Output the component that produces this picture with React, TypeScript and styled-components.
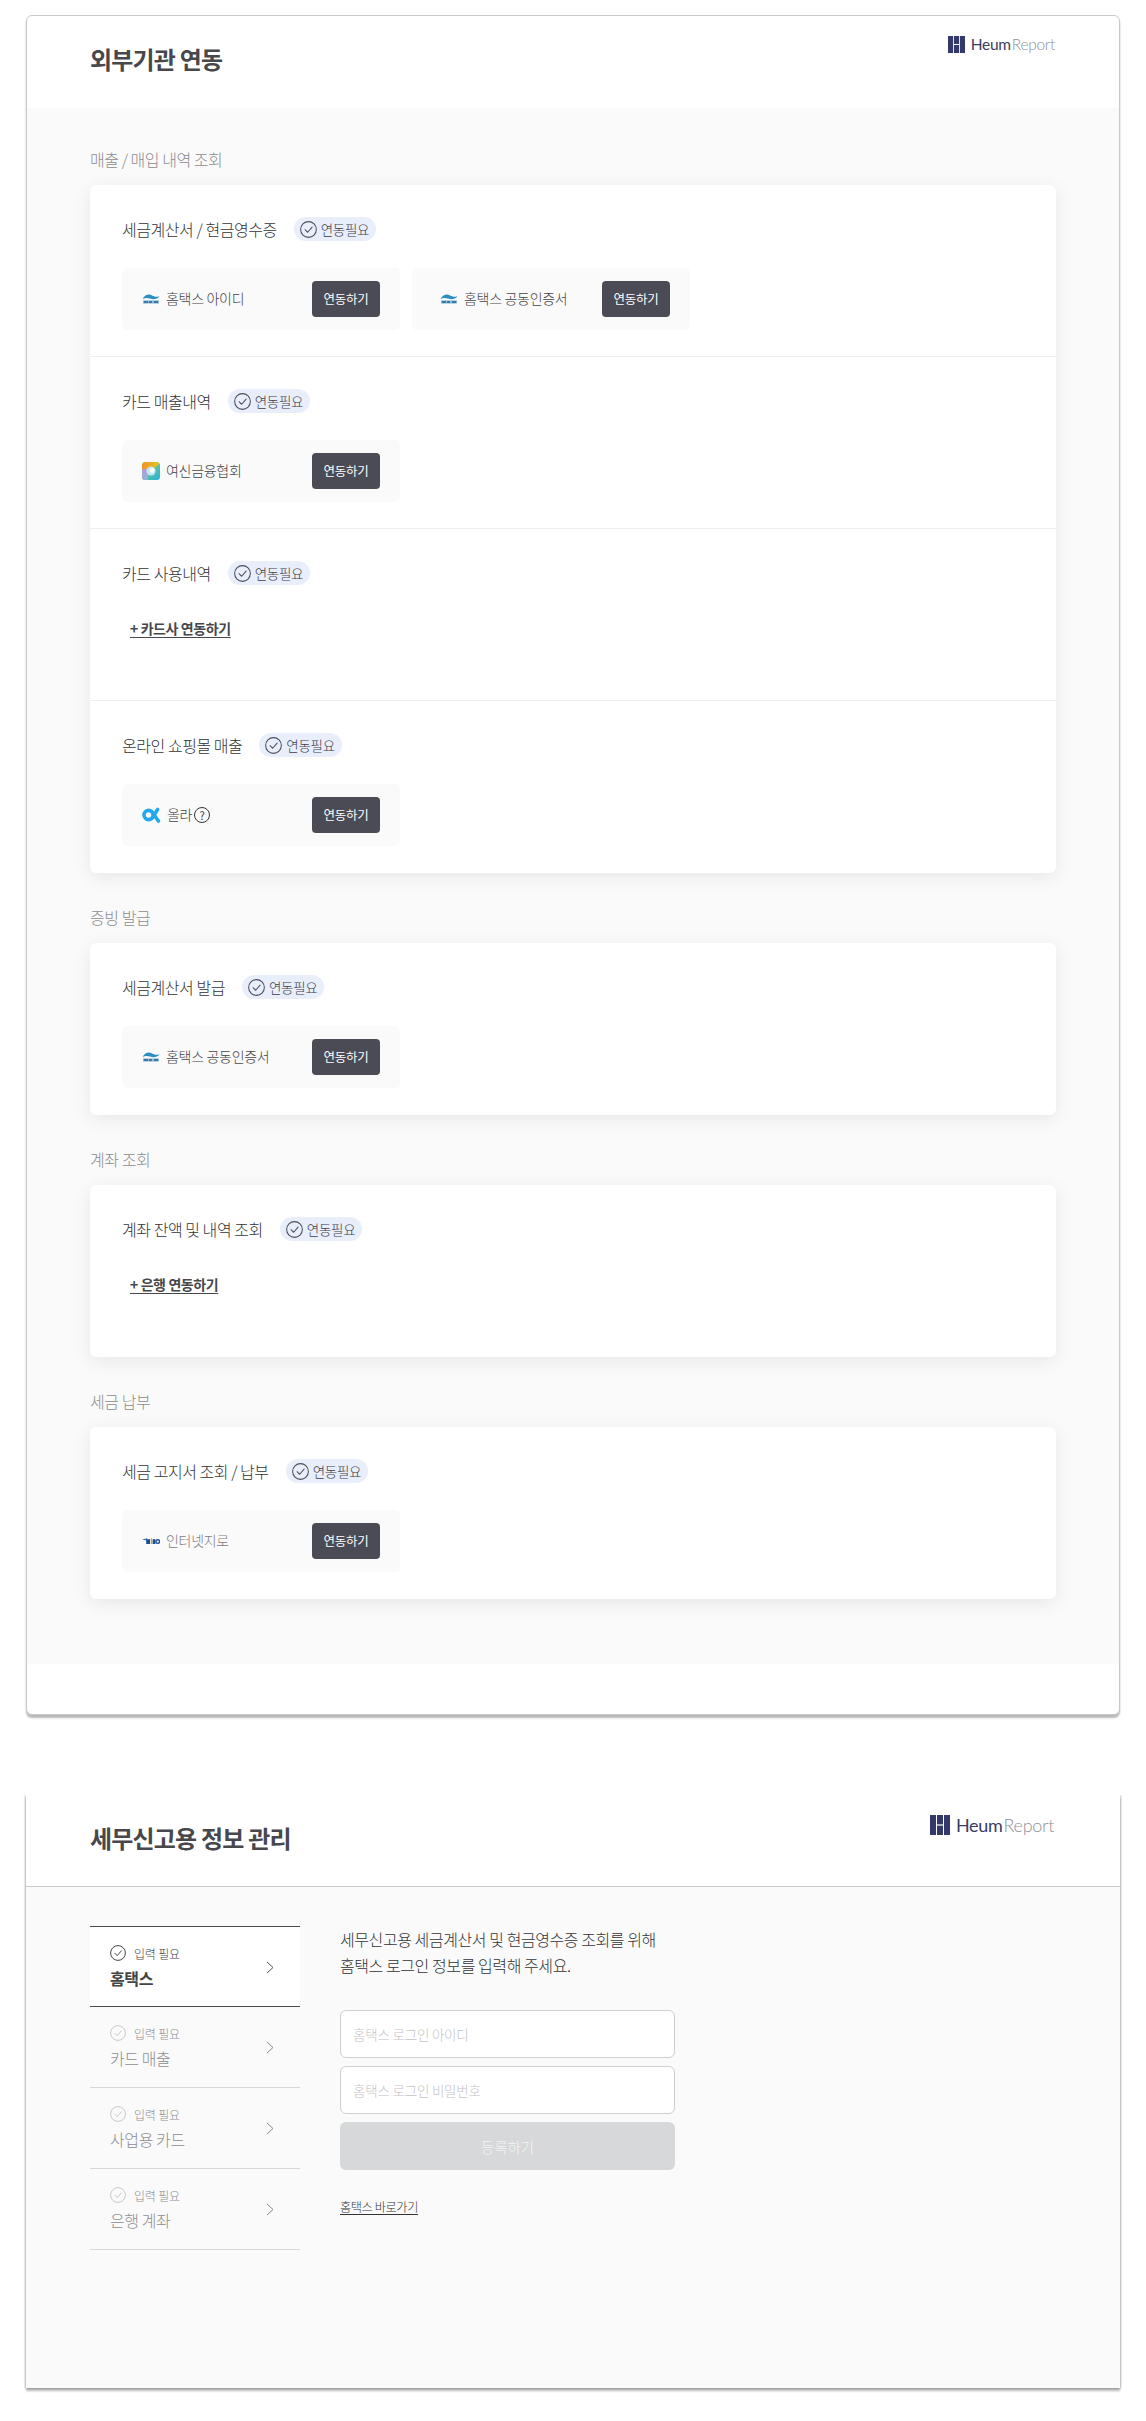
import React from "react";
import styled, { createGlobalStyle } from "styled-components";

const GlobalStyle = createGlobalStyle`
  html, body {
    margin: 0;
    padding: 0;
    background: #fff;
    font-family: "Noto Sans CJK KR", "Noto Sans", sans-serif;
    color: #444;
  }
  * { box-sizing: border-box; }
`;

const Page = styled.div`
  width: 1146px;
  height: 2421px;
  padding: 15px 26px 0;
  overflow: hidden;
`;
const Window = styled.section`
  background: #fff;
  border: 1px solid #c9c9c9;
  border-radius: 6px;
  box-shadow: 0 3px 2px rgba(0, 0, 0, 0.28);
`;
const SecondWindow = styled.section`
  margin-top: 80px;
  background: #fff;
  box-shadow: -1px 0 2px rgba(0, 0, 0, 0.2), 1px 0 2px rgba(0, 0, 0, 0.2),
    0 3px 2px rgba(0, 0, 0, 0.28);
  clip-path: inset(0 -6px -8px -6px);
`;
const Header = styled.header`
  height: 92px;
  padding: 0 64px 0 63px;
  display: flex;
  justify-content: space-between;
  align-items: flex-start;
`;
const Title = styled.h1`
  margin: 27px 0 0;
  font-size: 24px;
  line-height: 32px;
  font-weight: 700;
  letter-spacing: -0.8px;
  color: #47474c;
`;
const LogoWrap = styled.div<{ $big?: boolean }>`
  margin-top: 20px;
  display: flex;
  align-items: center;
  gap: 6px;
  font-family: Lato, sans-serif;
  font-size: ${(p) => (p.$big ? "18px" : "15.5px")};
  line-height: ${(p) => (p.$big ? "20px" : "17px")};
  letter-spacing: -0.3px;
`;
const LogoHeum = styled.span`
  color: #3a3d63;
`;
const LogoReport = styled.span`
  color: #8f919c;
  font-weight: 300;
  margin-left: 1px;
`;
const Body = styled.div`
  background: #fafafa;
  padding: 41px 63px 65px;
`;
const SectionLabel = styled.h2`
  margin: 0 0 16px;
  font-size: 16px;
  line-height: 20px;
  font-weight: 300;
  color: #8c8c90;
  letter-spacing: -0.45px;
`;
const Section = styled.div`
  & + & {
    margin-top: 34px;
  }
`;
const Card = styled.div`
  background: #fff;
  border-radius: 6px;
  box-shadow: 0 4px 18px rgba(0, 0, 0, 0.08);
`;
const Row = styled.div`
  height: 172px;
  padding: 32px 32px 0;
  border-bottom: 1px solid #eeeeef;
  &:last-child {
    border-bottom: none;
  }
`;
const RowHead = styled.div`
  display: flex;
  align-items: center;
  height: 24px;
  gap: 17px;
`;
const RowTitle = styled.span`
  font-size: 16px;
  font-weight: 300;
  color: #333336;
  letter-spacing: -0.45px;
`;
const Badge = styled.span`
  display: inline-flex;
  align-items: center;
  gap: 4px;
  height: 24px;
  padding: 0 7px 0 6px;
  border-radius: 12px;
  background: #e9eefb;
  font-size: 13.5px;
  font-weight: 300;
  letter-spacing: -0.3px;
  color: #3a3d4e;
`;
const Tiles = styled.div`
  display: flex;
  gap: 12px;
  margin-top: 27px;
`;
const Tile = styled.div<{ $inset?: boolean }>`
  width: 278px;
  height: 62px;
  padding: 0 20px 0 ${(p) => (p.$inset ? "28px" : "20px")};
  display: flex;
  align-items: center;
  border-radius: 5px;
  background: #fafafa;
`;
const TileName = styled.span<{ $muted?: boolean }>`
  margin: 0 0 2px 6px;
  font-size: 14px;
  font-weight: 300;
  letter-spacing: -0.3px;
  color: ${(p) => (p.$muted ? "#7c7c80" : "#444448")};
`;
const HelpMark = styled.span`
  margin-left: 2px;
  width: 16px;
  height: 16px;
  border: 1px solid #333;
  border-radius: 50%;
  display: inline-flex;
  align-items: center;
  justify-content: center;
  font-size: 11px;
  line-height: 1;
  color: #333;
`;
const ConnectButton = styled.button`
  margin-left: auto;
  width: 68px;
  height: 36px;
  padding: 0 0 2px;
  border: none;
  border-radius: 4px;
  background: #4b4b55;
  color: #fff;
  font-family: inherit;
  font-size: 12.5px;
  font-weight: 400;
  letter-spacing: -0.3px;
`;
const AddLink = styled.a`
  display: inline-block;
  margin: 33px 0 0 8px;
  font-size: 14px;
  line-height: 20px;
  font-weight: 700;
  letter-spacing: -0.4px;
  color: #47474c;
  text-decoration: underline;
  text-underline-offset: 3px;
`;
const SecondHeader = styled(Header)`
  padding: 0 66px 0 64px;
  border-bottom: 1px solid #c9c9c9;
`;
const SecondBody = styled.div`
  height: 501px;
  background: #fafafa;
  padding: 39px 64px 0;
  display: flex;
  gap: 40px;
`;
const Steps = styled.nav`
  width: 210px;
`;
const Step = styled.div<{ $active?: boolean }>`
  height: 81px;
  padding: 18px 20px 0;
  position: relative;
  background: ${(p) => (p.$active ? "#fff" : "transparent")};
  border-bottom: 1px solid ${(p) => (p.$active ? "#4b4b50" : "#d8d8d8")};
  border-top: ${(p) => (p.$active ? "1px solid #4b4b50" : "none")};
  color: ${(p) => (p.$active ? "#444" : "#8e8e92")};
`;
const StepStatus = styled.div`
  display: flex;
  align-items: center;
  gap: 8px;
  height: 16px;
  font-size: 12px;
  font-weight: 300;
  letter-spacing: -0.2px;
`;
const StepName = styled.div<{ $active?: boolean }>`
  margin-top: 5px;
  font-size: 16px;
  line-height: 24px;
  letter-spacing: -0.4px;
  font-weight: ${(p) => (p.$active ? 700 : 300)};
`;
const StepArrow = styled.svg`
  position: absolute;
  right: 26px;
  top: 34px;
`;
const FormArea = styled.div`
  width: 335px;
`;
const Intro = styled.p`
  margin: 0 0 32px;
  font-size: 16px;
  font-weight: 300;
  line-height: 26px;
  letter-spacing: -0.42px;
  color: #333336;
  white-space: nowrap;
`;
const Field = styled.input`
  display: block;
  width: 100%;
  height: 48px;
  margin-bottom: 8px;
  padding: 0 12px;
  border: 1px solid #cfcfd1;
  border-radius: 6px;
  background: #fff;
  font-family: inherit;
  font-size: 13.5px;
  font-weight: 300;
  letter-spacing: -0.2px;
  &::placeholder {
    color: #c4c4c6;
  }
`;
const Submit = styled.button`
  display: block;
  width: 100%;
  height: 48px;
  padding: 0;
  border: none;
  border-radius: 6px;
  background: #d6d8d9;
  color: #f4f4f4;
  font-family: inherit;
  font-size: 14.5px;
  font-weight: 300;
`;
const SiteLink = styled.a`
  display: inline-block;
  margin-top: 28px;
  font-size: 12.2px;
  font-weight: 300;
  line-height: 18px;
  letter-spacing: -0.4px;
  color: #333336;
  text-decoration: underline;
  text-underline-offset: 2px;
`;
const Footer = styled.div`
  height: 50px;
`;

const CheckCircle = ({ size = 17, color = "#4c4f60" }: { size?: number; color?: string }) => (
  <svg width={size} height={size} viewBox="0 0 16 16" fill="none" stroke={color} strokeWidth="1">
    <circle cx="8" cy="8" r="7.4" />
    <path d="M4.8 8.2 7.2 10.6 11.4 5.8" strokeLinecap="round" strokeLinejoin="round" />
  </svg>
);

const Logo = ({ big }: { big?: boolean }) => {
  const size = big ? 20 : 17;
  return (
    <LogoWrap $big={big}>
      <svg width={size} height={size} viewBox="0 0 20 20" fill="#333a6b">
        <rect x="0" y="0" width="6" height="20" />
        <rect x="7" y="0" width="6" height="9.4" />
        <rect x="7" y="10.6" width="6" height="9.4" />
        <rect x="14" y="0" width="6" height="20" />
      </svg>
      <span>
        <LogoHeum>Heum</LogoHeum>
        <LogoReport>Report</LogoReport>
      </span>
    </LogoWrap>
  );
};

const HometaxLogo = () => (
  <svg width="18" height="12" viewBox="0 0 18 12">
    <path d="M0.5 6C3 1.5 7 .8 10 2.4 12 3.4 14 3.8 17.5 3.6 15 6.6 11 6.8 8 5.6 5.5 4.6 3 4.6 .5 6Z" fill="#2a8fc0" />
    <path d="M1 7.4H17V10.6H1Z" fill="#8ab8d2" />
    <path d="M2 8.2H6V9.8H2ZM7 8.2H10V9.8H7ZM12 8.2H16V9.8H12Z" fill="#1f6494" />
  </svg>
);

const CreditLogo = () => (
  <svg width="18" height="18" viewBox="0 0 18 18">
    <defs>
      <linearGradient id="cl1" x1="0" y1="0" x2="1" y2="0">
        <stop offset="0" stopColor="#f0932b" />
        <stop offset="1" stopColor="#e6c41f" />
      </linearGradient>
      <linearGradient id="cl2" x1="0" y1="0" x2="1" y2="1">
        <stop offset="0" stopColor="#a4d94a" />
        <stop offset="1" stopColor="#1db0e6" />
      </linearGradient>
      <linearGradient id="cl3" x1="0" y1="0" x2="0" y2="1">
        <stop offset="0" stopColor="#b59ad6" />
        <stop offset="1" stopColor="#8fb4e2" />
      </linearGradient>
    </defs>
    <rect width="18" height="18" rx="3.5" fill="url(#cl2)" />
    <path d="M0 3.5A3.5 3.5 0 0 1 3.5 0H15A3 3 0 0 1 17 2L13 5.5H6L3 8V18A3 3 0 0 1 0 14.5Z" fill="url(#cl1)" />
    <path d="M0 7H6V18H3.5A3.5 3.5 0 0 1 0 14.5Z" fill="url(#cl3)" />
    <circle cx="9" cy="9" r="4.6" fill="#c5e6f6" />
    <circle cx="10.2" cy="8.4" r="2.3" fill="#fff" />
  </svg>
);

const OllaLogo = () => (
  <svg width="19" height="16" viewBox="0 0 19 16" fill="none" stroke="#22a8f0" strokeWidth="3.6">
    <circle cx="6.6" cy="8" r="4.6" />
    <path d="M10 11 15.6 2.4M10 5 16.4 14" strokeLinecap="round" />
  </svg>
);

const GiroLogo = () => (
  <svg width="18" height="10" viewBox="0 0 18 10">
    <path d="M0 3.6 5.4 2.2 4.4 4.6Z" fill="#2a78b8" />
    <path d="M4.2 3.2H8V8H4.2Z" fill="#1d4f8f" />
    <rect x="8.7" y="2.4" width="1.3" height="5.6" fill="#e09a2a" />
    <rect x="10.6" y="3.2" width="2.8" height="4.8" fill="#1d4f8f" />
    <circle cx="15.8" cy="5.6" r="1.8" fill="none" stroke="#1d4f8f" strokeWidth="1.4" />
  </svg>
);

type TileData = { logo: React.ReactNode; name: string; muted?: boolean; help?: boolean; inset?: boolean };
type RowData = { title: string; tiles?: TileData[]; add?: string };
type SectionData = { label: string; rows: RowData[] };

const sections: SectionData[] = [
  {
    label: "매출 / 매입 내역 조회",
    rows: [
      {
        title: "세금계산서 / 현금영수증",
        tiles: [
          { logo: <HometaxLogo />, name: "홈택스 아이디" },
          { logo: <HometaxLogo />, name: "홈택스 공동인증서", inset: true },
        ],
      },
      { title: "카드 매출내역", tiles: [{ logo: <CreditLogo />, name: "여신금융협회" }] },
      { title: "카드 사용내역", add: "+ 카드사 연동하기" },
      { title: "온라인 쇼핑몰 매출", tiles: [{ logo: <OllaLogo />, name: "올라", help: true }] },
    ],
  },
  {
    label: "증빙 발급",
    rows: [{ title: "세금계산서 발급", tiles: [{ logo: <HometaxLogo />, name: "홈택스 공동인증서" }] }],
  },
  { label: "계좌 조회", rows: [{ title: "계좌 잔액 및 내역 조회", add: "+ 은행 연동하기" }] },
  {
    label: "세금 납부",
    rows: [
      {
        title: "세금 고지서 조회 / 납부",
        tiles: [{ logo: <GiroLogo />, name: "인터넷지로", muted: true }],
      },
    ],
  },
];

const steps = ["홈택스", "카드 매출", "사업용 카드", "은행 계좌"];

export default function App() {
  return (
    <Page>
      <GlobalStyle />
      <Window>
        <Header>
          <Title>외부기관 연동</Title>
          <Logo />
        </Header>
        <Body>
          {sections.map((section) => (
            <Section key={section.label}>
              <SectionLabel>{section.label}</SectionLabel>
              <Card>
                {section.rows.map((row) => (
                  <Row key={row.title}>
                    <RowHead>
                      <RowTitle>{row.title}</RowTitle>
                      <Badge>
                        <CheckCircle />
                        연동필요
                      </Badge>
                    </RowHead>
                    {row.tiles && (
                      <Tiles>
                        {row.tiles.map((tile) => (
                          <Tile key={tile.name} $inset={tile.inset}>
                            {tile.logo}
                            <TileName $muted={tile.muted}>{tile.name}</TileName>
                            {tile.help && <HelpMark>?</HelpMark>}
                            <ConnectButton>연동하기</ConnectButton>
                          </Tile>
                        ))}
                      </Tiles>
                    )}
                    {row.add && <AddLink href="#">{row.add}</AddLink>}
                  </Row>
                ))}
              </Card>
            </Section>
          ))}
        </Body>
        <Footer />
      </Window>
      <SecondWindow>
        <SecondHeader>
          <Title>세무신고용 정보 관리</Title>
          <Logo big />
        </SecondHeader>
        <SecondBody>
          <Steps>
            {steps.map((name, i) => (
              <Step key={name} $active={i === 0}>
                <StepStatus>
                  <CheckCircle size={16} color={i === 0 ? "#444" : "#c8c8c8"} />
                  입력 필요
                </StepStatus>
                <StepName $active={i === 0}>{name}</StepName>
                <StepArrow width="8" height="13" viewBox="0 0 8 13" fill="none" stroke={i === 0 ? "#555" : "#888"} strokeWidth="1">
                  <path d="M1 1 7 6.5 1 12" />
                </StepArrow>
              </Step>
            ))}
          </Steps>
          <FormArea>
            <Intro>
              세무신고용 세금계산서 및 현금영수증 조회를 위해
              <br />
              홈택스 로그인 정보를 입력해 주세요.
            </Intro>
            <Field placeholder="홈택스 로그인 아이디" />
            <Field placeholder="홈택스 로그인 비밀번호" />
            <Submit>등록하기</Submit>
            <SiteLink href="#">홈택스 바로가기</SiteLink>
          </FormArea>
        </SecondBody>
      </SecondWindow>
    </Page>
  );
}
